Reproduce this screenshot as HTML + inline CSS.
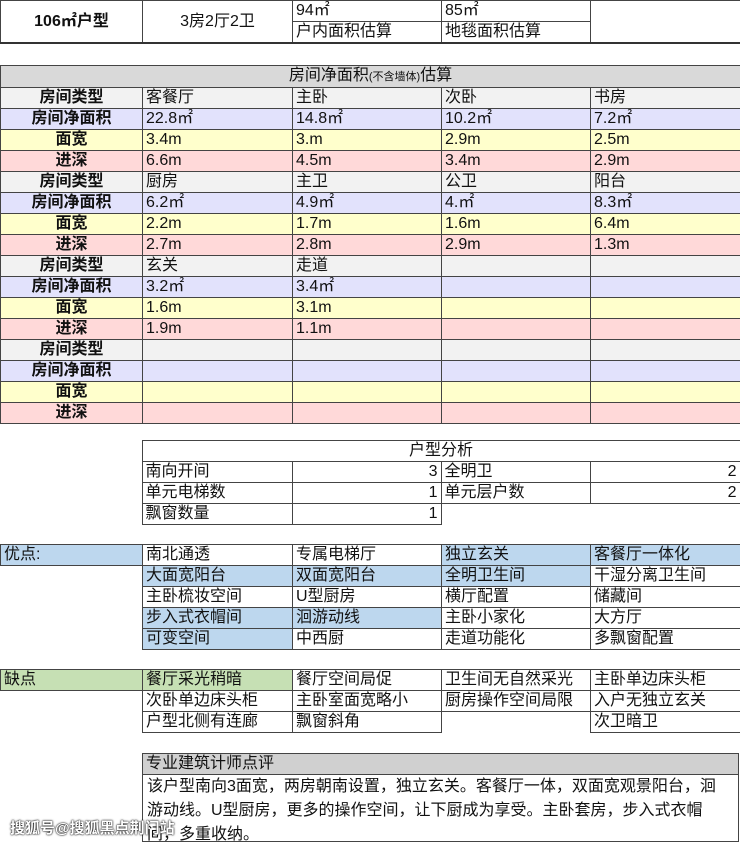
<!DOCTYPE html>
<html><head><meta charset="utf-8"><style>
body{margin:0;width:740px;height:843px;background:#fff;position:relative;overflow:hidden;font-family:"Liberation Sans","Noto Sans CJK SC",sans-serif;font-size:16px;color:#111}
table{position:absolute;left:0;border-collapse:collapse;table-layout:fixed;width:740px}
td{height:20px;padding:0 3px;border:1px solid #444;white-space:nowrap;overflow:hidden;line-height:20px}
td.n{border:none}
.l{text-align:center;font-weight:bold}
.g{background:#f2f2f2}.p{background:#e2e2fc}.y{background:#ffffcc}.k{background:#ffd9d9}
.h{background:#d9d9d9;text-align:center}
.b{background:#bdd7ee}.gr{background:#c6e0b4}
.r{text-align:right}
</style></head><body>
<table style="top:0;border-bottom:2px solid #333">
<colgroup><col style="width:142px"><col style="width:150px"><col style="width:149px"><col style="width:149px"><col style="width:150px"></colgroup>
<tr><td rowspan="2" class="l" style="height:41px">106㎡户型</td><td rowspan="2" style="text-align:center">3房2厅2卫</td><td>94㎡</td><td>85㎡</td><td rowspan="2"></td></tr>
<tr><td>户内面积估算</td><td>地毯面积估算</td></tr>
</table>
<table style="top:65px">
<colgroup><col style="width:142px"><col style="width:150px"><col style="width:149px"><col style="width:149px"><col style="width:150px"></colgroup>
<tr><td colspan="5" class="h">房间净面积<span style="font-size:11px">(不含墙体)</span>估算</td></tr>
<tr class="g"><td class="l">房间类型</td><td>客餐厅</td><td>主卧</td><td>次卧</td><td>书房</td></tr>
<tr class="p"><td class="l">房间净面积</td><td>22.8㎡</td><td>14.8㎡</td><td>10.2㎡</td><td>7.2㎡</td></tr>
<tr class="y"><td class="l">面宽</td><td>3.4m</td><td>3.m</td><td>2.9m</td><td>2.5m</td></tr>
<tr class="k"><td class="l">进深</td><td>6.6m</td><td>4.5m</td><td>3.4m</td><td>2.9m</td></tr>
<tr class="g"><td class="l">房间类型</td><td>厨房</td><td>主卫</td><td>公卫</td><td>阳台</td></tr>
<tr class="p"><td class="l">房间净面积</td><td>6.2㎡</td><td>4.9㎡</td><td>4.㎡</td><td>8.3㎡</td></tr>
<tr class="y"><td class="l">面宽</td><td>2.2m</td><td>1.7m</td><td>1.6m</td><td>6.4m</td></tr>
<tr class="k"><td class="l">进深</td><td>2.7m</td><td>2.8m</td><td>2.9m</td><td>1.3m</td></tr>
<tr class="g"><td class="l">房间类型</td><td>玄关</td><td>走道</td><td></td><td></td></tr>
<tr class="p"><td class="l">房间净面积</td><td>3.2㎡</td><td>3.4㎡</td><td></td><td></td></tr>
<tr class="y"><td class="l">面宽</td><td>1.6m</td><td>3.1m</td><td></td><td></td></tr>
<tr class="k"><td class="l">进深</td><td>1.9m</td><td>1.1m</td><td></td><td></td></tr>
<tr class="g"><td class="l">房间类型</td><td></td><td></td><td></td><td></td></tr>
<tr class="p"><td class="l">房间净面积</td><td></td><td></td><td></td><td></td></tr>
<tr class="y"><td class="l">面宽</td><td></td><td></td><td></td><td></td></tr>
<tr class="k"><td class="l">进深</td><td></td><td></td><td></td><td></td></tr>
</table>
<table style="top:440px">
<colgroup><col style="width:142px"><col style="width:150px"><col style="width:149px"><col style="width:149px"><col style="width:150px"></colgroup>
<tr><td class="n"></td><td colspan="4" style="text-align:center">户型分析</td></tr>
<tr><td class="n"></td><td>南向开间</td><td class="r">3</td><td>全明卫</td><td class="r">2</td></tr>
<tr><td class="n"></td><td>单元电梯数</td><td class="r">1</td><td>单元层户数</td><td class="r">2</td></tr>
<tr><td class="n"></td><td>飘窗数量</td><td class="r">1</td><td class="n"></td><td class="n"></td></tr>
</table>
<table style="top:544px">
<colgroup><col style="width:142px"><col style="width:150px"><col style="width:149px"><col style="width:149px"><col style="width:150px"></colgroup>
<tr><td class="b">优点:</td><td>南北通透</td><td>专属电梯厅</td><td class="b">独立玄关</td><td class="b">客餐厅一体化</td></tr>
<tr><td class="n"></td><td class="b">大面宽阳台</td><td class="b">双面宽阳台</td><td class="b">全明卫生间</td><td>干湿分离卫生间</td></tr>
<tr><td class="n"></td><td>主卧梳妆空间</td><td>U型厨房</td><td>横厅配置</td><td>储藏间</td></tr>
<tr><td class="n"></td><td class="b">步入式衣帽间</td><td class="b">洄游动线</td><td>主卧小家化</td><td>大方厅</td></tr>
<tr><td class="n"></td><td class="b">可变空间</td><td>中西厨</td><td>走道功能化</td><td>多飘窗配置</td></tr>
</table>
<table style="top:669px">
<colgroup><col style="width:142px"><col style="width:150px"><col style="width:149px"><col style="width:149px"><col style="width:150px"></colgroup>
<tr><td class="gr">缺点</td><td class="gr">餐厅采光稍暗</td><td>餐厅空间局促</td><td>卫生间无自然采光</td><td>主卧单边床头柜</td></tr>
<tr><td class="n"></td><td>次卧单边床头柜</td><td>主卧室面宽略小</td><td>厨房操作空间局限</td><td>入户无独立玄关</td></tr>
<tr><td class="n"></td><td>户型北侧有连廊</td><td>飘窗斜角</td><td class="n" style="border-top:1px solid #444"></td><td>次卫暗卫</td></tr>
</table>
<div style="position:absolute;left:142px;top:753px;width:597px;background:#d0d0d0;border:1px solid #444;padding-left:3px;line-height:20px;box-sizing:border-box;height:22px">专业建筑计师点评</div>
<div style="position:absolute;left:142px;top:774px;width:597px;height:68px;border:1px solid #444;border-top:none;box-sizing:border-box;padding:1px 4px;line-height:24px;white-space:nowrap;font-size:16px">该户型南向3面宽，两房朝南设置，独立玄关。客餐厅一体，双面宽观景阳台，洄<br>游动线。U型厨房，更多的操作空间，让下厨成为享受。主卧套房，步入式衣帽<br><span style="padding-left:0">间，多重收纳。</span></div>
<div style="position:absolute;left:10px;top:817px;font-size:15px;color:#fff;font-weight:bold;text-shadow:0 0 2px #000,0 0 1px #000">搜狐号@搜狐黑点荆门站</div>
</body></html>
